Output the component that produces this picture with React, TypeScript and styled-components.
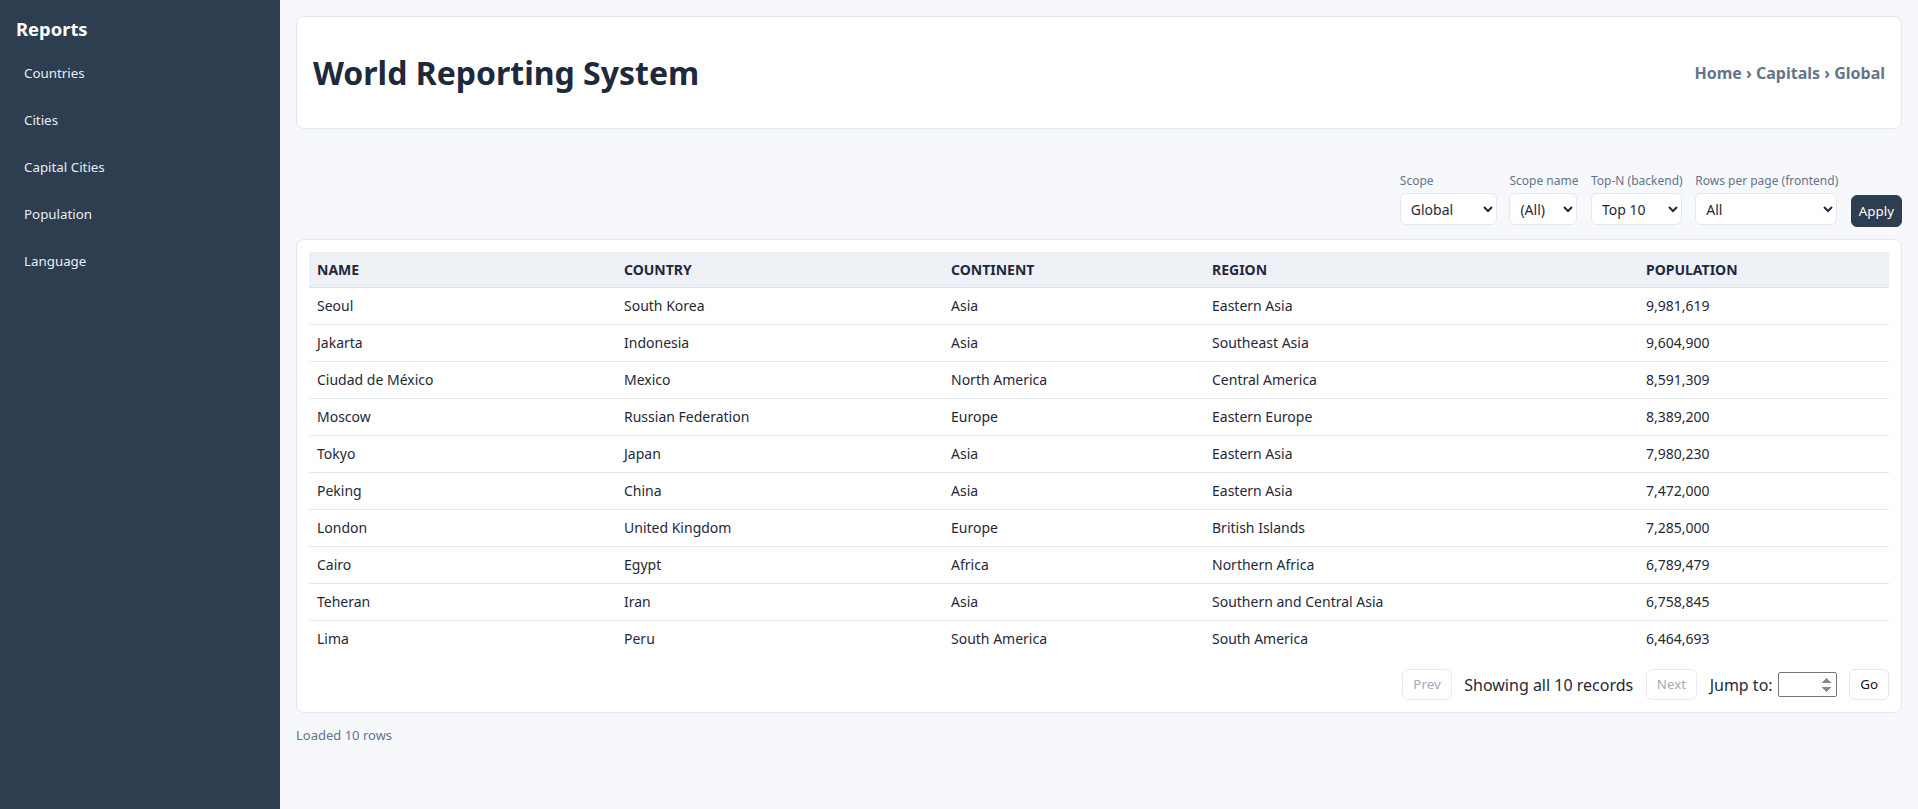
import React from "react";
import styled, { createGlobalStyle } from "styled-components";

const GlobalStyle = createGlobalStyle`
  html, body { margin: 0; padding: 0; }
  body {
    font-family: "Noto Sans", "Open Sans", sans-serif;
    background: #f6f8fb;
    color: #1f2937;
  }
  * { box-sizing: border-box; }
`;

const Shell = styled.div`
  display: flex;
  min-height: 100vh;
`;

const Sidebar = styled.aside`
  width: 280px;
  flex: 0 0 280px;
  background: #2c3e50;
  padding: 16px;
  color: #ffffff;
`;

const Brand = styled.h2`
  margin: 0 0 9px;
  font-size: 18.4px;
  line-height: 25px;
  font-weight: 700;
`;

const NavList = styled.nav`
  display: flex;
  flex-direction: column;
`;

const NavItem = styled.a`
  display: block;
  padding: 14px 8px;
  font-size: 13.33px;
  line-height: 19px;
  color: #e8edf2;
  text-decoration: none;
`;

const Main = styled.main`
  flex: 1;
  min-width: 0;
  padding: 16px;
`;

const Card = styled.section`
  background: #ffffff;
  border: 1px solid #e2e8f0;
  border-radius: 8px;
`;

const HeaderCard = styled(Card)`
  display: flex;
  align-items: center;
  justify-content: space-between;
  padding: 12px 16px;
`;

const Title = styled.h1`
  margin: 21.5px 0;
  font-size: 32px;
  line-height: 44px;
  font-weight: 700;
  color: #1e293b;
`;

const Breadcrumb = styled.div`
  font-size: 16px;
  font-weight: 700;
  color: #64748b;
`;

const Toolbar = styled.div`
  display: flex;
  justify-content: flex-end;
  align-items: flex-end;
  gap: 12.6px;
  margin-top: 44px;
`;

const Field = styled.label`
  display: flex;
  flex-direction: column;
  gap: 4px;
`;

const FieldLabel = styled.span`
  font-size: 12px;
  line-height: 16.3px;
  color: #64748b;
  white-space: nowrap;
`;

const Select = styled.select<{ $w: number }>`
  width: ${(p) => p.$w}px;
  height: 32px;
  padding: 0 6px;
  font-family: inherit;
  font-size: 14px;
  color: #1f2937;
  background: #ffffff;
  border: 1px solid #e2e8f0;
  border-radius: 6px;
`;

const Button = styled.button<{ $variant?: "primary" | "ghost" | "plain" }>`
  font-family: inherit;
  font-size: 13.33px;
  border-radius: 6px;
  cursor: pointer;
  ${(p) =>
    p.$variant === "primary"
      ? `
    background: #2c3e50;
    color: #ffffff;
    border: 1px solid #2c3e50;
    padding: 6px 7px;
    line-height: 18px;
    margin-bottom: -2px;
  `
      : p.$variant === "ghost"
      ? `
    background: #ffffff;
    color: #a4abb6;
    border: 1px solid #e8ecf1;
    padding: 6px 10px;
    line-height: 17px;
  `
      : `
    background: #ffffff;
    color: #111111;
    border: 1px solid #e2e8f0;
    padding: 6px 10px;
    line-height: 17px;
  `}
`;

const TableCard = styled(Card)`
  margin-top: 14px;
  padding: 12px;
`;

const Table = styled.table`
  width: 100%;
  border-collapse: collapse;
  table-layout: fixed;
  font-size: 14px;
`;

const Col = styled.col<{ $w?: number }>`
  width: ${(p) => (p.$w ? `${p.$w}px` : "auto")};
`;

const Th = styled.th`
  text-align: left;
  background: #edf1f6;
  color: #1e293b;
  font-weight: 700;
  text-transform: uppercase;
  padding: 7.5px 8px;
  line-height: 20px;
  border-bottom: 1px solid #dbe2ea;
`;

const Tr = styled.tr`
  &:not(:last-child) td {
    border-bottom: 1px solid #e2e8f0;
  }
`;

const Td = styled.td`
  padding: 8px;
  line-height: 20px;
  color: #1f2937;
`;

const Pager = styled.div`
  display: flex;
  justify-content: flex-end;
  align-items: center;
  gap: 12.6px;
  margin-top: 12px;
`;

const PagerText = styled.span`
  font-size: 16px;
  color: #1f2937;
`;

const JumpLabel = styled.label`
  display: flex;
  align-items: center;
  gap: 5px;
  font-size: 16px;
  color: #1f2937;
`;

const JumpInput = styled.input`
  width: 59px;
  height: 25px;
  padding: 1px 2px;
  font-family: inherit;
  font-size: 13.33px;
  border: 1px solid #767676;
  border-radius: 2px;
  background: #ffffff;

  &::-webkit-inner-spin-button,
  &::-webkit-outer-spin-button {
    opacity: 1;
  }
`;

const Status = styled.p`
  margin: 13px 0 0;
  font-size: 13px;
  line-height: 18px;
  color: #64748b;
`;

const rows = [
  ["Seoul", "South Korea", "Asia", "Eastern Asia", "9,981,619"],
  ["Jakarta", "Indonesia", "Asia", "Southeast Asia", "9,604,900"],
  ["Ciudad de México", "Mexico", "North America", "Central America", "8,591,309"],
  ["Moscow", "Russian Federation", "Europe", "Eastern Europe", "8,389,200"],
  ["Tokyo", "Japan", "Asia", "Eastern Asia", "7,980,230"],
  ["Peking", "China", "Asia", "Eastern Asia", "7,472,000"],
  ["London", "United Kingdom", "Europe", "British Islands", "7,285,000"],
  ["Cairo", "Egypt", "Africa", "Northern Africa", "6,789,479"],
  ["Teheran", "Iran", "Asia", "Southern and Central Asia", "6,758,845"],
  ["Lima", "Peru", "South America", "South America", "6,464,693"],
];

const columns = [
  { label: "Name", w: 307 },
  { label: "Country", w: 327 },
  { label: "Continent", w: 261 },
  { label: "Region", w: 434 },
  { label: "Population" },
];

export default function App() {
  return (
    <>
      <GlobalStyle />
      <Shell>
        <Sidebar>
          <Brand>Reports</Brand>
          <NavList>
            {["Countries", "Cities", "Capital Cities", "Population", "Language"].map((n) => (
              <NavItem key={n} href="#">
                {n}
              </NavItem>
            ))}
          </NavList>
        </Sidebar>
        <Main>
          <HeaderCard>
            <Title>World Reporting System</Title>
            <Breadcrumb>Home › Capitals › Global</Breadcrumb>
          </HeaderCard>

          <Toolbar>
            <Field>
              <FieldLabel>Scope</FieldLabel>
              <Select $w={97} defaultValue="Global">
                <option>Global</option>
                <option>Continent</option>
                <option>Region</option>
              </Select>
            </Field>
            <Field>
              <FieldLabel>Scope name</FieldLabel>
              <Select $w={68} defaultValue="(All)">
                <option>(All)</option>
              </Select>
            </Field>
            <Field>
              <FieldLabel>Top-N (backend)</FieldLabel>
              <Select $w={91} defaultValue="Top 10">
                <option>Top 10</option>
                <option>Top 20</option>
              </Select>
            </Field>
            <Field>
              <FieldLabel>Rows per page (frontend)</FieldLabel>
              <Select $w={142} defaultValue="All">
                <option>All</option>
                <option>10</option>
              </Select>
            </Field>
            <Button $variant="primary">Apply</Button>
          </Toolbar>

          <TableCard>
            <Table>
              <colgroup>
                {columns.map((c) => (
                  <Col key={c.label} $w={c.w} />
                ))}
              </colgroup>
              <thead>
                <tr>
                  {columns.map((c) => (
                    <Th key={c.label}>{c.label}</Th>
                  ))}
                </tr>
              </thead>
              <tbody>
                {rows.map((r) => (
                  <Tr key={r[0]}>
                    {r.map((v, i) => (
                      <Td key={i}>{v}</Td>
                    ))}
                  </Tr>
                ))}
              </tbody>
            </Table>
            <Pager>
              <Button $variant="ghost" disabled>
                Prev
              </Button>
              <PagerText>Showing all 10 records</PagerText>
              <Button $variant="ghost" disabled>
                Next
              </Button>
              <JumpLabel>
                Jump to:
                <JumpInput type="number" />
              </JumpLabel>
              <Button $variant="plain">Go</Button>
            </Pager>
          </TableCard>
          <Status>Loaded 10 rows</Status>
        </Main>
      </Shell>
    </>
  );
}
